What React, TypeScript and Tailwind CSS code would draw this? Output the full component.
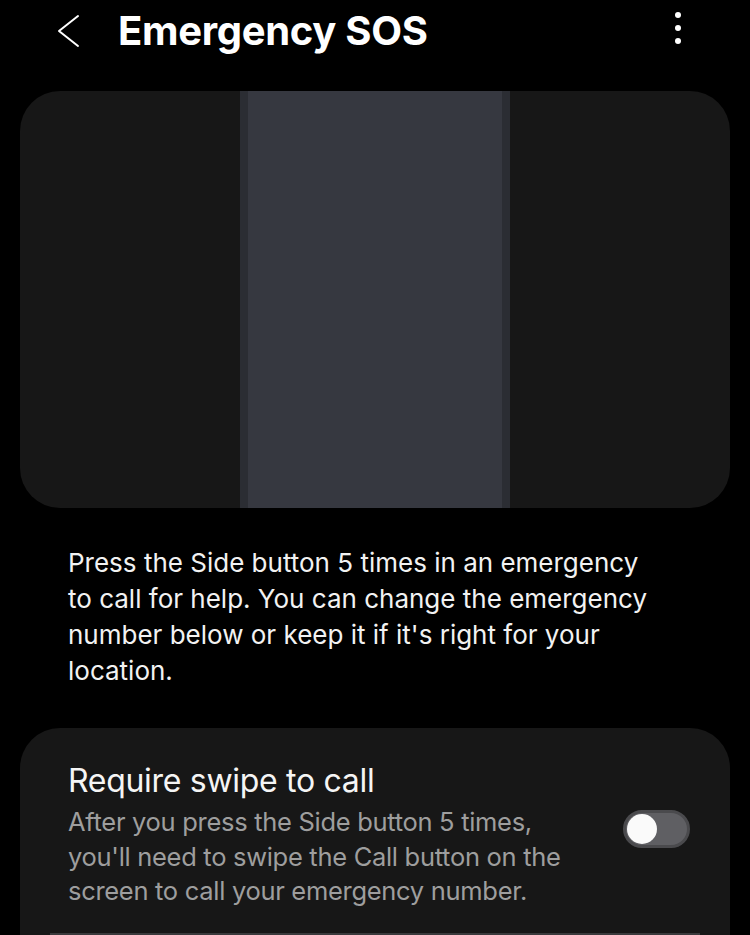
const Toggle = () => (
  <div className="w-[67px] h-[38px] rounded-full bg-[#5f5f63] border-[3px] border-[#4a4a4d] flex items-center px-[1px]">
    <div className="w-[30px] h-[30px] rounded-full bg-[#fafafa]" />
  </div>
);

const App = () => {
  return (
    <div className="w-[750px] h-[935px] bg-black overflow-hidden font-['Inter',sans-serif] text-white">
      <div className="h-[91px] flex items-start pt-[8px]">
        <div className="w-[118px] pl-[56px] pt-[6px]">
          <svg width="26" height="34" viewBox="0 0 26 34" fill="none">
            <polyline points="22,2 3,17 22,32" stroke="#ffffff" strokeWidth="2" strokeLinecap="round" strokeLinejoin="round" />
          </svg>
        </div>
        <h1 className="text-[40px] font-bold leading-[46px] tracking-[-0.3px] flex-1">Emergency SOS</h1>
        <div className="w-[40px] mr-[52px] flex flex-col items-center gap-[7px] pt-[4px]">
          <span className="w-[6px] h-[6px] rounded-full bg-white" />
          <span className="w-[6px] h-[6px] rounded-full bg-white" />
          <span className="w-[6px] h-[6px] rounded-full bg-white" />
        </div>
      </div>

      <div className="mx-[20px] h-[417px] rounded-[40px] bg-[#171717] overflow-hidden flex">
        <div className="w-[220px]" />
        <div className="w-[270px] bg-[#2b2d33] px-[8px] flex">
          <div className="flex-1 bg-[#363840]" />
        </div>
        <div className="flex-1" />
      </div>

      <p className="ml-[68px] w-[590px] pt-[37px] text-[26px] leading-[36px] text-[#f2f2f2]">
        Press the Side button 5 times in an emergency to call for help. You can change the emergency number below or keep it if it's right for your location.
      </p>

      <div className="mx-[20px] mt-[39px] rounded-t-[40px] bg-[#171717] h-[260px] pt-[33px] px-[48px]">
        <div className="flex items-center justify-between">
          <div className="flex-1">
            <div className="text-[32px] leading-[40px] text-[#f5f5f5] tracking-[-0.3px]">Require swipe to call</div>
            <div className="mt-[4px] text-[25.5px] leading-[34.5px] text-[#9e9e9e] w-[510px] tracking-[-0.3px]">
              After you press the Side button 5 times, you'll need to swipe the Call button on the screen to call your emergency number.
            </div>
          </div>
          <div className="mr-[-8px] mt-[-12px]">
            <Toggle />
          </div>
        </div>
        <div className="mt-[24px] h-[2px] bg-[#3a3a3c] mx-[-18px]" />
      </div>
    </div>
  );
};

export default App;
